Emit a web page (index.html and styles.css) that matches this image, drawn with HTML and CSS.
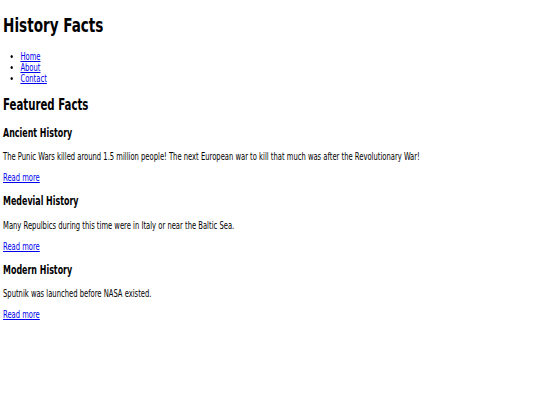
FILE: index.html
```html
<!DOCTYPE html>
<html lang="en">
<head>
<meta charset="utf-8">
<title>History Facts</title>
<link rel="stylesheet" href="styles.css">
</head>
<body>
<div class="page">
<header>
  <h1 class="title">History Facts</h1>
  <nav>
    <ul class="nav-list">
      <li><a href="#">Home</a></li>
      <li><a href="#">About</a></li>
      <li><a href="#">Contact</a></li>
    </ul>
  </nav>
</header>
<main>
  <h2 class="section-title">Featured Facts</h2>
  <article class="fact">
    <h3 class="fact-title">Ancient History</h3>
    <p class="fact-text">The Punic Wars killed around 1.5 million people! The next European war to kill that much was after the Revolutionary War!</p>
    <a class="more" href="#">Read more</a>
  </article>
  <article class="fact">
    <h3 class="fact-title">Medevial History</h3>
    <p class="fact-text">Many Repulbics during this time were in Italy or near the Baltic Sea.</p>
    <a class="more" href="#">Read more</a>
  </article>
  <article class="fact">
    <h3 class="fact-title">Modern History</h3>
    <p class="fact-text">Sputnik was launched before NASA existed.</p>
    <a class="more" href="#">Read more</a>
  </article>
</main>
</div>
</body>
</html>
```
FILE: styles.css
```css
html {
  overflow: hidden;
  background: #fff;
}
body {
  margin: 0;
  font-family: "DejaVu Sans Condensed", "DejaVu Sans", sans-serif;
  font-size: 10px;
  color: #000;
}
.page {
  box-sizing: border-box;
  width: 100%;
  padding: 0 4px;
  transform: scaleX(0.755);
  transform-origin: 0 0;
}
.title {
  font-size: 20px;
  margin: 13.4px 0;
}
.nav-list {
  margin: 10px 0;
  padding-left: 23px;
}
a {
  color: #0000ee;
}
.section-title {
  font-size: 15px;
  margin: 12px 0;
}
.fact-title {
  font-size: 11.7px;
  margin: 11.3px 0;
}
.fact-text {
  margin: 10px 0;
  white-space: nowrap;
}
```
